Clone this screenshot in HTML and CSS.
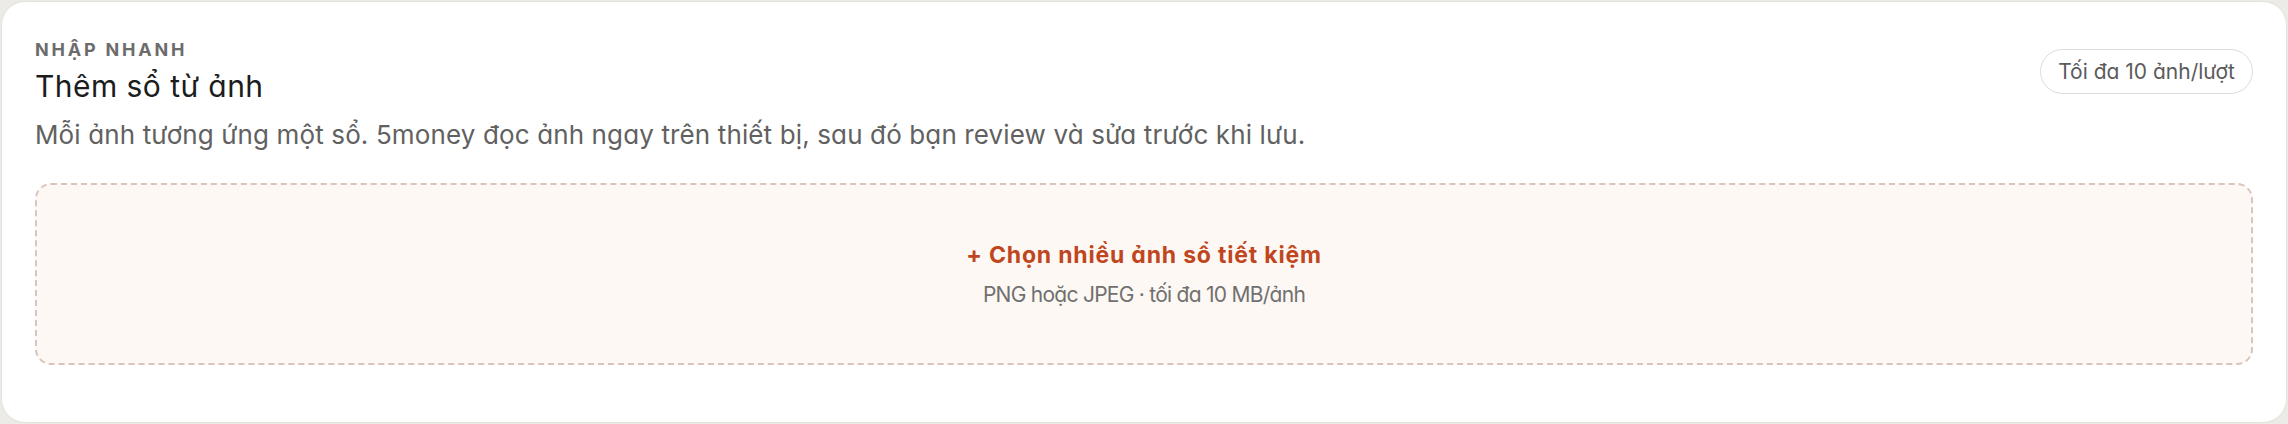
FILE: index.html
```html
<!DOCTYPE html>
<html lang="vi">
<head>
<meta charset="utf-8">
<title>Thêm sổ từ ảnh</title>
<link rel="stylesheet" href="styles.css">
</head>
<body>
<section class="card">
  <div class="head">
    <div class="titles">
      <div class="eyebrow">NHẬP NHANH</div>
      <h2 class="title">Thêm sổ từ ảnh</h2>
    </div>
    <span class="pill">Tối đa 10 ảnh/lượt</span>
  </div>
  <p class="desc">Mỗi ảnh tương ứng một sổ. 5money đọc ảnh ngay trên thiết bị, sau đó bạn review và sửa trước khi lưu.</p>
  <label class="drop">
    <span class="drop-main">+ Chọn nhiều ảnh sổ tiết kiệm</span>
    <span class="drop-sub">PNG hoặc JPEG · tối đa 10 MB/ảnh</span>
  </label>
</section>
</body>
</html>
```

FILE: styles.css
```css
* { box-sizing: border-box; }
html, body { margin: 0; padding: 0; }
body {
  background: #ecebe6;
  padding: 1px;
  font-family: Inter, "Noto Sans", sans-serif;
  font-feature-settings: "cv11" 1;
}
.card {
  background: #ffffff;
  border: 1px solid #e2e1dc;
  border-radius: 24px;
  padding: 36px 33px 55px 33px;
  height: 422px;
}
.head {
  display: flex;
  justify-content: space-between;
  align-items: center;
}
.titles {
  display: flex;
  flex-direction: column;
  gap: 5px;
}
.eyebrow {
  font-size: 18px;
  line-height: 24px;
  font-weight: 700;
  letter-spacing: 0.155em;
  color: #6c6c6c;
}
.title {
  margin: 0;
  font-size: 30px;
  line-height: 38px;
  font-weight: 400;
  color: #1c1c1c;
  letter-spacing: 0.015em;
}
.pill {
  border: 1px solid #dddcd8;
  border-radius: 999px;
  padding: 10px 17px;
  font-size: 21px;
  line-height: 23px;
  color: #5b5b5b;
  letter-spacing: 0;
}
.desc {
  margin: 12px 0 0 0;
  font-size: 26px;
  line-height: 36px;
  color: #616161;
  letter-spacing: 0.005em;
}
.drop {
  margin-top: 30px;
  height: 182px;
  border: 2px dashed #d9c4be;
  border-radius: 16px;
  background: #fdf8f3;
  display: flex;
  flex-direction: column;
  align-items: center;
  justify-content: center;
  gap: 10px;
  padding-top: 2px;
}
.drop-main {
  font-size: 23px;
  line-height: 30px;
  font-weight: 700;
  color: #c0461e;
  letter-spacing: 0.035em;
}
.drop-sub {
  font-size: 21px;
  line-height: 30px;
  color: #707070;
  letter-spacing: -0.035em;
}
```
